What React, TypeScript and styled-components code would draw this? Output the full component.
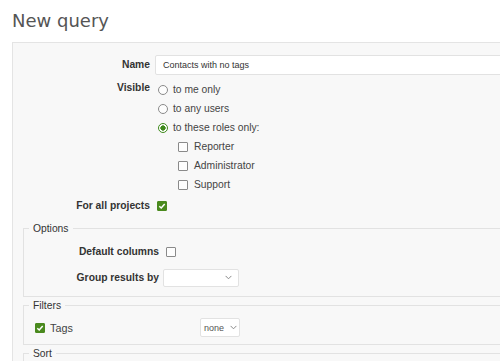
import React from "react";
import styled, { createGlobalStyle } from "styled-components";

const GlobalStyle = createGlobalStyle`
  html, body {
    margin: 0;
    padding: 0;
    background: #ffffff;
    overflow: hidden;
  }
  body {
    font-family: "Liberation Sans", Arial, sans-serif;
    font-size: 10.3px;
    color: #333;
  }
`;

const roles = ["Reporter", "Administrator", "Support"];

const visibility = [
  { label: "to me only", checked: false },
  { label: "to any users", checked: false },
  { label: "to these roles only:", checked: true },
];

const CheckIcon = () => (
  <svg width="8" height="8" viewBox="0 0 8 8">
    <path d="M1.3 4.2 L3.2 6 L6.7 1.9" fill="none" stroke="#fff" strokeWidth="1.5" />
  </svg>
);

const Chevron = () => (
  <ChevronSvg width="7" height="5" viewBox="0 0 7 5">
    <path d="M0.6 0.9 L3.5 3.8 L6.4 0.9" fill="none" stroke="#8a8a8a" strokeWidth="1" />
  </ChevronSvg>
);

const App: React.FC = () => {
  return (
    <Page>
      <GlobalStyle />
      <Title>New query</Title>
      <Box>
        <Row>
          <Label>Name</Label>
          <TextInput>Contacts with no tags</TextInput>
        </Row>

        <Row $top>
          <Label $pad>Visible</Label>
          <OptionList>
            {visibility.map((v) => (
              <OptionLine key={v.label}>
                <Radio $checked={v.checked} />
                {v.label}
              </OptionLine>
            ))}
            {roles.map((r) => (
              <OptionLine key={r} $indent>
                <Box10 />
                <RoleText>{r}</RoleText>
              </OptionLine>
            ))}
          </OptionList>
        </Row>

        <Row $gap={6}>
          <Label>For all projects</Label>
          <Box10 $checked $ml={2}>
            <CheckIcon />
          </Box10>
        </Row>

        <Fieldset>
          <Legend>Options</Legend>
          <FieldRow $mt={7}>
            <FieldLabel>Default columns</FieldLabel>
            <Box10 $ml={3} />
          </FieldRow>
          <FieldRow $mt={7}>
            <FieldLabel>Group results by</FieldLabel>
            <Select $w={76} $pr={6}>
              <span></span>
              <Chevron />
            </Select>
          </FieldRow>
          <Spacer $h={9} />
        </Fieldset>

        <Fieldset>
          <Legend>Filters</Legend>
          <FilterRow>
            <FilterName>
              <Box10 $checked>
                <CheckIcon />
              </Box10>
              Tags
            </FilterName>
            <Select $w={40} $h={19} $pl={3} $pr={2}>
              <SelectText>none</SelectText>
              <Chevron />
            </Select>
          </FilterRow>
          <Spacer $h={7} />
        </Fieldset>

        <Fieldset>
          <Legend>Sort</Legend>
          <Spacer $h={40} />
        </Fieldset>
      </Box>
    </Page>
  );
};

export default App;

const Page = styled.div`
  padding: 10px 0 0 12px;
  width: 720px;
`;

const Title = styled.h2`
  margin: 0 0 11px 0;
  font-family: "DejaVu Sans", sans-serif;
  font-weight: normal;
  font-size: 18px;
  line-height: 21px;
  color: #555;
`;

const Box = styled.div`
  width: 640px;
  background: #f8f8f8;
  border: 1px solid #e4e4e4;
  padding: 12px 0 20px 0;
`;

const Row = styled.div<{ $top?: boolean; $gap?: number }>`
  display: flex;
  align-items: ${(p) => (p.$top ? "flex-start" : "center")};
  margin-top: ${(p) => (p.$gap !== undefined ? p.$gap : 5)}px;
  &:first-child {
    margin-top: 0;
  }
`;

const Label = styled.label<{ $pad?: boolean }>`
  width: 137px;
  margin-right: 5px;
  text-align: right;
  font-weight: bold;
  color: #333;
  padding-top: ${(p) => (p.$pad ? 2 : 0)}px;
  line-height: 12px;
`;

const TextInput = styled.div`
  width: 400px;
  height: 18px;
  background: #fff;
  border: 1px solid #e2e2e2;
  border-radius: 2px;
  font-size: 9px;
  line-height: 18px;
  padding-left: 7px;
  color: #333;
`;

const OptionList = styled.div`
  display: flex;
  flex-direction: column;
`;

const OptionLine = styled.div<{ $indent?: boolean }>`
  display: flex;
  align-items: center;
  height: 19px;
  padding-left: ${(p) => (p.$indent ? 23 : 3)}px;
  color: #444;
  gap: 5px;
`;

const RoleText = styled.span`
  margin-left: 1px;
`;

const Radio = styled.span<{ $checked?: boolean }>`
  box-sizing: border-box;
  width: 10px;
  height: 10px;
  border-radius: 50%;
  border: 1px solid ${(p) => (p.$checked ? "#3f8a1c" : "#8a8a8a")};
  background: ${(p) =>
    p.$checked
      ? "radial-gradient(circle, #3f8a1c 0 2.4px, #fff 2.9px)"
      : "#fdfdfd"};
  ${(p) => (p.$checked ? "border-width: 1.5px;" : "")}
`;

const Box10 = styled.span<{ $checked?: boolean; $ml?: number }>`
  box-sizing: border-box;
  width: 10px;
  height: 10px;
  margin-left: ${(p) => p.$ml || 0}px;
  border-radius: 1px;
  border: 1px solid ${(p) => (p.$checked ? "#4a8a1e" : "#8a8a8a")};
  background: ${(p) => (p.$checked ? "#4a8a1e" : "#fdfdfd")};
  display: inline-flex;
  align-items: center;
  justify-content: center;
  flex-shrink: 0;
`;

const Fieldset = styled.fieldset`
  margin: 10px 0 0 10px;
  padding: 0 5px;
  border: 1px solid #e2e2e2;
  border-right: none;
  min-inline-size: 0;
  & + & {
    margin-top: 2px;
  }
`;

const Legend = styled.legend`
  padding: 0 4px;
  font-size: 10.3px;
  line-height: 13px;
  color: #333;
`;

const FieldRow = styled.div<{ $mt: number }>`
  display: flex;
  align-items: center;
  min-height: 19px;
  margin-top: ${(p) => p.$mt}px;
`;

const FieldLabel = styled.label`
  width: 130px;
  margin-right: 4px;
  text-align: right;
  font-weight: bold;
  color: #333;
`;

const Select = styled.div<{ $w: number; $h?: number; $pl?: number; $pr?: number }>`
  box-sizing: border-box;
  width: ${(p) => p.$w}px;
  height: ${(p) => p.$h || 18}px;
  background: #fff;
  border: 1px solid #e2e2e2;
  border-radius: 2px;
  display: flex;
  align-items: center;
  justify-content: space-between;
  padding: 0 ${(p) => p.$pr ?? 4}px 0 ${(p) => p.$pl ?? 4}px;
`;

const ChevronSvg = styled.svg`
  flex-shrink: 0;
`;

const SelectText = styled.span`
  font-size: 9px;
  color: #555;
`;

const FilterRow = styled.div`
  display: flex;
  align-items: center;
  margin-top: 6px;
  padding-left: 6px;
`;

const FilterName = styled.div`
  width: 165px;
  display: flex;
  align-items: center;
  gap: 5px;
  color: #444;
  font-size: 10.8px;
`;

const Spacer = styled.div<{ $h: number }>`
  height: ${(p) => p.$h}px;
`;
